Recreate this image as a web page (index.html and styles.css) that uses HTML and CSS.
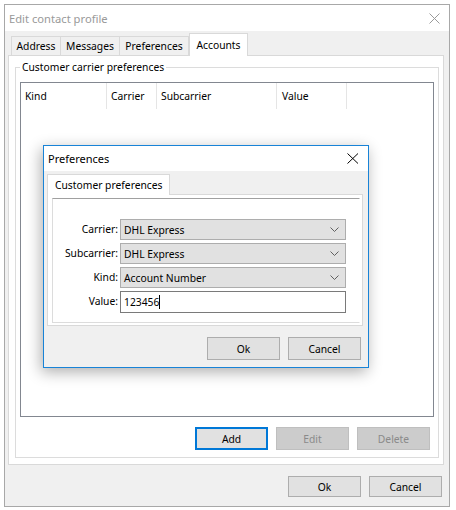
FILE: index.html
```html
<!DOCTYPE html>
<html>
<head>
<meta charset="utf-8">
<link rel="stylesheet" href="styles.css">
</head>
<body>
<div class="window">
  <div class="titlebar">
    <span class="title">Edit contact profile</span>
    <svg class="close" width="11" height="11" viewBox="0 0 11 11"><path d="M0.5 0.5 L10.5 10.5 M10.5 0.5 L0.5 10.5" stroke="#9a9a9a" stroke-width="1" fill="none"/></svg>
  </div>
  <div class="client">
    <div class="tabs">
      <div class="tab tab-address">Address</div>
      <div class="tab tab-messages">Messages</div>
      <div class="tab tab-prefs">Preferences</div>
      <div class="tab tab-accounts active">Accounts</div>
    </div>
    <div class="panel">
      <fieldset class="group">
        <legend>Customer carrier preferences</legend>
        <div class="list">
          <div class="list-header">
            <div class="col col-kind">Kind</div>
            <div class="col col-carrier">Carrier</div>
            <div class="col col-sub">Subcarrier</div>
            <div class="col col-value">Value</div>
          </div>
        </div>
        <div class="btn-row">
          <button class="btn btn-default">Add</button>
          <button class="btn btn-disabled" disabled>Edit</button>
          <button class="btn btn-disabled" disabled>Delete</button>
        </div>
      </fieldset>
    </div>
    <div class="footer">
      <button class="btn btn-footer">Ok</button>
      <button class="btn btn-footer">Cancel</button>
    </div>
  </div>
</div>

<div class="dialog">
  <div class="d-titlebar">
    <span class="d-title">Preferences</span>
    <svg class="d-close" width="12" height="11" viewBox="0 0 12 11"><path d="M0.5 0.5 L11 10.5 M11 0.5 L0.5 10.5" stroke="#000" stroke-width="1" fill="none"/></svg>
  </div>
  <div class="d-client">
    <div class="d-tabs">
      <div class="d-tab">Customer preferences</div>
    </div>
    <div class="d-panel">
      <div class="d-group">
        <div class="form">
          <label class="f-label">Carrier:</label>
          <div class="combo"><span>DHL Express</span><svg class="chev" width="9" height="5" viewBox="0 0 9 5"><path d="M0.5 0.5 L4.5 4.5 L8.5 0.5" stroke="#606060" fill="none"/></svg></div>
          <label class="f-label">Subcarrier:</label>
          <div class="combo"><span>DHL Express</span><svg class="chev" width="9" height="5" viewBox="0 0 9 5"><path d="M0.5 0.5 L4.5 4.5 L8.5 0.5" stroke="#606060" fill="none"/></svg></div>
          <label class="f-label">Kind:</label>
          <div class="combo"><span>Account Number</span><svg class="chev" width="9" height="5" viewBox="0 0 9 5"><path d="M0.5 0.5 L4.5 4.5 L8.5 0.5" stroke="#606060" fill="none"/></svg></div>
          <label class="f-label">Value:</label>
          <div class="textbox"><span>123456</span><span class="caret"></span></div>
        </div>
      </div>
    </div>
    <div class="d-footer">
      <button class="btn btn-dlg">Ok</button>
      <button class="btn btn-dlg">Cancel</button>
    </div>
  </div>
</div>
</body>
</html>
```
FILE: styles.css
```css
html, body {
  margin: 0;
  padding: 0;
  background: #ffffff;
}
body {
  position: relative;
  width: 456px;
  height: 510px;
  overflow: hidden;
  font-family: "Noto Sans", "Open Sans", sans-serif;
  font-size: 10.3px;
  color: #000;
}

/* main window */
.window {
  margin: 4px 0 0 4px;
  width: 446px;
  height: 503px;
  box-sizing: border-box;
  border: 1px solid #a8a8a8;
  display: flex;
  flex-direction: column;
}
.titlebar {
  height: 26px;
  flex: none;
  background: #ffffff;
  display: flex;
  align-items: center;
  justify-content: space-between;
  padding: 0 9px 0 4px;
}
.title {
  font-size: 11.2px;
  color: #999999;
}
.close {
  display: block;
}
.client {
  flex: 1;
  background: #f0f0f0;
  padding-top: 2px;
}
.tabs {
  display: flex;
  align-items: flex-end;
  height: 22px;
  padding-left: 6px;
}
.tab {
  box-sizing: border-box;
  height: 19px;
  border: 1px solid #d9d9d9;
  border-bottom: none;
  background: #f0f0f0;
  display: flex;
  align-items: center;
  justify-content: center;
  line-height: 14px;
}
.tab-address { width: 50px; }
.tab-messages { width: 60px; margin-left: -1px; }
.tab-prefs { width: 70px; margin-left: -1px; }
.tab-accounts { width: 59px; }
.tab.active {
  height: 23px;
  margin-bottom: -1px;
  background: #ffffff;
  position: relative;
  z-index: 1;
  padding-bottom: 1px;
}
.panel {
  margin-left: 3px;
  width: 436px;
  height: 410px;
  box-sizing: border-box;
  border: 1px solid #d9d9d9;
  background: #ffffff;
  padding: 4px 0 0 6px;
}
.group {
  margin: 0;
  width: 424px;
  height: 398px;
  box-sizing: border-box;
  border: 1px solid #dcdcdc;
  padding: 0 4px 6px 4px;
}
.group legend {
  padding: 0 2px;
  margin-left: 0;
  line-height: 14px;
}
.list {
  margin-top: 8px;
  height: 335px;
  box-sizing: border-box;
  border: 1px solid #828790;
  background: #ffffff;
}
.list-header {
  display: flex;
  height: 26px;
  line-height: 26px;
}
.col {
  box-sizing: border-box;
  border-right: 1px solid #e5e5e5;
  padding-left: 4px;
}
.col-kind { width: 86px; }
.col-carrier { width: 50px; }
.col-sub { width: 120px; }
.col-value { width: 70px; padding-left: 5px; }

.btn-row {
  display: flex;
  justify-content: flex-end;
  gap: 8px;
  margin-top: 10px;
  padding-right: 4px;
}
.btn {
  font-family: inherit;
  font-size: 10.3px;
  box-sizing: border-box;
  width: 73px;
  height: 23px;
  margin: 0;
  padding: 0;
  border: 1px solid #adadad;
  background: #e1e1e1;
  color: #000;
  line-height: 14px;
}
.btn-default {
  border: 2px solid #0078d7;
}
.btn-disabled {
  background: #cccccc;
  border-color: #bfbfbf;
  color: #8a8a8a;
}
.footer {
  display: flex;
  justify-content: flex-end;
  gap: 8px;
  margin-top: 11px;
  padding-right: 7px;
}
.btn-footer {
  height: 21px;
}

/* Preferences dialog */
.dialog {
  position: absolute;
  left: 43px;
  top: 145px;
  width: 326px;
  height: 223px;
  box-sizing: border-box;
  border: 1px solid #1883d7;
  box-shadow: -2px 4px 14px rgba(0, 0, 0, 0.32);
  display: flex;
  flex-direction: column;
  background: #f0f0f0;
}
.d-titlebar {
  height: 25px;
  flex: none;
  background: #ffffff;
  display: flex;
  align-items: center;
  justify-content: space-between;
  padding: 0 9px 0 4px;
}
.d-title {
  font-size: 11px;
}
.d-close { display: block; }
.d-client {
  flex: 1;
  padding-top: 3px;
}
.d-tabs {
  display: flex;
  height: 20px;
  padding-left: 3px;
}
.d-tab {
  box-sizing: border-box;
  width: 123px;
  height: 21px;
  margin-bottom: -1px;
  border: 1px solid #d9d9d9;
  border-bottom: none;
  background: #ffffff;
  display: flex;
  align-items: center;
  padding-left: 7px;
  position: relative;
  z-index: 1;
}
.d-panel {
  margin-left: 3px;
  width: 316px;
  height: 132px;
  box-sizing: border-box;
  border: 1px solid #d9d9d9;
  background: #ffffff;
  padding: 3px 0 0 4px;
}
.d-group {
  width: 308px;
  height: 125px;
  box-sizing: border-box;
  border: 1px solid #dcdcdc;
  border-top-color: #a0a0a0;
  border-right-color: #ffffff;
  padding-top: 20px;
}
.form {
  display: grid;
  grid-template-columns: 65px 226px;
  column-gap: 2px;
  row-gap: 3px;
  grid-auto-rows: 21px;
}
.f-label {
  text-align: right;
  line-height: 21px;
  color: #000;
}
.combo {
  box-sizing: border-box;
  border: 1px solid #adadad;
  background: #e1e1e1;
  display: flex;
  align-items: center;
  justify-content: space-between;
  padding: 0 6px 0 3px;
  line-height: 14px;
}
.chev { display: block; }
.textbox {
  box-sizing: border-box;
  border: 1px solid #7a7a7a;
  background: #ffffff;
  display: flex;
  align-items: center;
  padding-left: 3px;
  line-height: 14px;
  height: 22px;
}
.caret {
  display: inline-block;
  width: 1px;
  height: 14px;
  background: #000;
  margin-left: 0;
}
.d-footer {
  display: flex;
  justify-content: flex-end;
  gap: 8px;
  margin-top: 11px;
  padding-right: 7px;
}
.btn-dlg {
  height: 23px;
}
```
